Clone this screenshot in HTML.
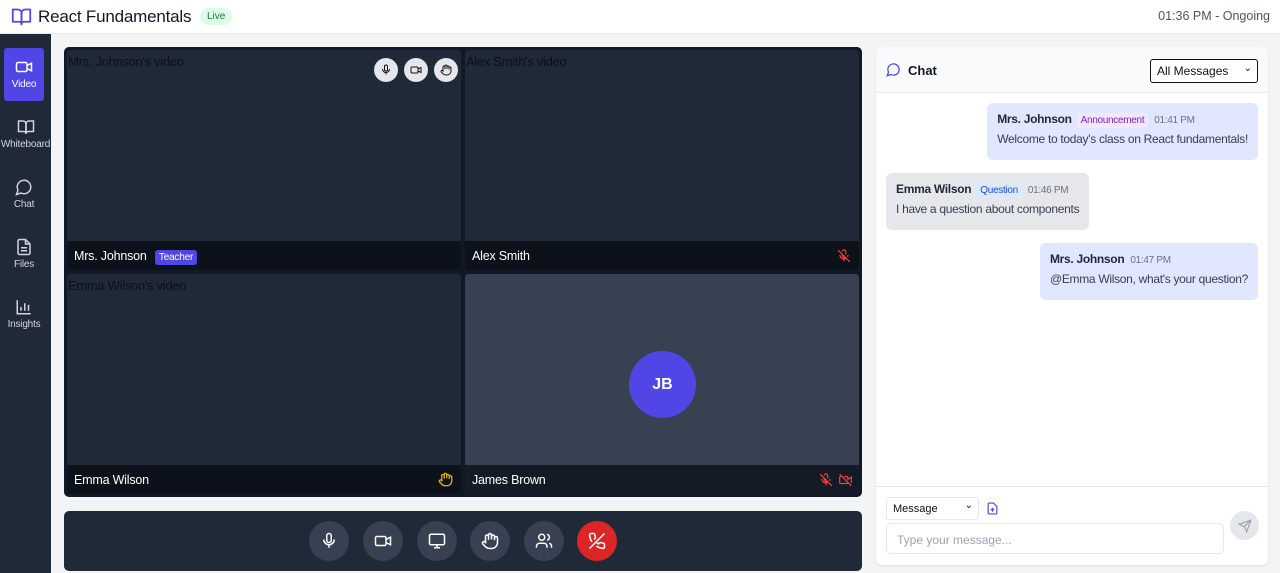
<!DOCTYPE html>
<html><head><meta charset="utf-8"><style>
*{box-sizing:border-box;margin:0;padding:0}
body{width:1280px;height:573px;overflow:hidden;background:#f3f4f6;font-family:"Liberation Sans",sans-serif;position:relative;font-size:12px}
.hdr{position:absolute;left:0;top:0;width:1280px;height:34px;background:#fff;border-bottom:1px solid #e5e7eb}
.side{position:absolute;left:0;top:34px;width:51px;height:539px;background:#1f2937}
.nav{position:absolute;left:4px;width:40px;height:53px;color:#d1d5db;font-size:10px;text-align:center;letter-spacing:-0.2px}
.nav svg{display:block;margin:10px auto 3px}
.grid{position:absolute;left:64px;top:47px;width:798px;height:450px;background:#111827;border-radius:5px}
.tile{position:absolute;width:394px;height:220px;background:#1f2937;border-radius:4px;overflow:hidden;color:#111;font-size:13px}
.tile .alt{position:absolute;left:1px;top:4px;color:#0b0f17;letter-spacing:-0.3px}
.tile .bar{position:absolute;left:0;bottom:0;width:100%;height:29px;background:#0d1119;color:#fff;font-size:12.5px;padding:8px 0 0 7px;letter-spacing:-0.2px}
.badge{background:#4f46e5;color:#fff;font-size:10px;padding:2px 4px;border-radius:3px;margin-left:5px}
.ctl{position:absolute;left:64px;top:511px;width:798px;height:60px;background:#1f2937;border-radius:5px}
.cb{position:absolute;top:10px;width:40px;height:40px;border-radius:50%;background:#374151;display:flex;align-items:center;justify-content:center}
.chat{position:absolute;left:876px;top:47px;width:392px;height:518px;background:#fff;border-radius:6px;box-shadow:0 1px 2px rgba(0,0,0,.1);overflow:hidden}
.ch{height:46px;background:#f9fafb;border-bottom:1px solid #e5e7eb;position:relative}
.msg{position:absolute;border-radius:6px;padding:9px 10px;font-size:12px;color:#374151;white-space:nowrap;letter-spacing:-0.3px;height:57px}
.msg b{color:#1f2937;font-size:12px}
.tm{color:#6b7280;font-size:10px;margin-left:6px}
.tag{font-size:10px;padding:2px 4px;margin-left:5px;border-radius:2px}
.top-ic{position:absolute;top:8px;width:24px;height:24px;border-radius:50%;background:#e5e7eb;display:flex;align-items:center;justify-content:center}
</style></head><body>
<div class="hdr">
 <svg style="position:absolute;left:11px;top:6px" width="21" height="21" viewBox="0 0 24 24" fill="none" stroke="#4f46e5" stroke-width="2" stroke-linecap="round" stroke-linejoin="round"><path d="M2 4h6a4 4 0 0 1 4 4v13a3 3 0 0 0-3-3H2z"/><path d="M22 4h-6a4 4 0 0 0-4 4v13a3 3 0 0 1 3-3h7z"/></svg>
 <div style="position:absolute;left:38px;top:7px;font-size:17px;color:#111827;letter-spacing:-0.2px">React Fundamentals</div>
 <div style="position:absolute;left:200px;top:8px;background:#dcfce7;color:#15803d;font-size:10px;padding:3px 7px;border-radius:9px">Live</div>
 <div style="position:absolute;right:10px;top:9px;font-size:12.5px;color:#4b5563">01:36 PM - Ongoing</div>
</div>
<div class="side">
 <div class="nav" style="top:14px;background:#4f46e5;color:#fff;border-radius:3px"><svg width="18" height="18" viewBox="0 0 24 24" fill="none" stroke="#fff" stroke-width="2"><rect x="2" y="6" width="14" height="12" rx="2"/><path d="M16 10l6-3v10l-6-3"/></svg>Video</div>
 <div class="nav" style="top:74px;left:0;width:51px"><svg width="18" height="18" viewBox="0 0 24 24" fill="none" stroke="#d1d5db" stroke-width="2"><path d="M2 4h6a4 4 0 0 1 4 4v13a3 3 0 0 0-3-3H2z"/><path d="M22 4h-6a4 4 0 0 0-4 4v13a3 3 0 0 1 3-3h7z"/></svg>Whiteboard</div>
 <div class="nav" style="top:134px"><svg width="18" height="18" viewBox="0 0 24 24" fill="none" stroke="#d1d5db" stroke-width="2"><path d="M7.9 20A9 9 0 1 0 4 16.1L2 22z"/></svg>Chat</div>
 <div class="nav" style="top:194px"><svg width="18" height="18" viewBox="0 0 24 24" fill="none" stroke="#d1d5db" stroke-width="2"><path d="M14 2H6a2 2 0 0 0-2 2v16a2 2 0 0 0 2 2h12a2 2 0 0 0 2-2V8z"/><path d="M14 2v6h6M8 13h8M8 17h8"/></svg>Files</div>
 <div class="nav" style="top:254px"><svg width="18" height="18" viewBox="0 0 24 24" fill="none" stroke="#d1d5db" stroke-width="2"><path d="M3 3v18h18M8 17v-5M13 17V7M18 17v-8"/></svg>Insights</div>
</div>
<div class="grid">
 <div class="tile" style="left:3px;top:3px"><span class="alt">Mrs. Johnson's video</span>
  <div class="top-ic" style="left:307px"><svg width="12" height="12" viewBox="0 0 24 24" fill="none" stroke="#111" stroke-width="2"><rect x="9" y="2" width="6" height="12" rx="3"/><path d="M5 10a7 7 0 0 0 14 0M12 17v4"/></svg></div>
  <div class="top-ic" style="left:337px"><svg width="12" height="12" viewBox="0 0 24 24" fill="none" stroke="#111" stroke-width="2"><rect x="2" y="6" width="14" height="12" rx="2"/><path d="M16 10l6-3v10l-6-3"/></svg></div>
  <div class="top-ic" style="left:367px"><svg width="12" height="12" viewBox="0 0 24 24" fill="none" stroke="#111" stroke-width="2"><path d="M18 11V6a2 2 0 0 0-4 0M14 10V4a2 2 0 0 0-4 0v2M10 10.5V6a2 2 0 0 0-4 0v8M18 8a2 2 0 1 1 4 0v6a8 8 0 0 1-8 8h-2c-2.8 0-4.5-.9-6-2.4l-3.6-3.6a2 2 0 0 1 2.8-2.8L7 15"/></svg></div>
  <div class="bar">Mrs. Johnson <span class="badge">Teacher</span></div></div>
 <div class="tile" style="left:401px;top:3px"><span class="alt">Alex Smith's video</span>
  <div class="bar">Alex Smith<svg style="position:absolute;right:8px;top:8px" width="14" height="14" viewBox="0 0 24 24" fill="none" stroke="#ef4444" stroke-width="2"><path d="M2 2l20 20M9 9v3a3 3 0 0 0 5 2M15 9.3V5a3 3 0 0 0-6-1M19 10a7 7 0 0 1-1 3.5M5 10a7 7 0 0 0 11 5.7M12 17v4"/></svg></div></div>
 <div class="tile" style="left:3px;top:227px"><span class="alt">Emma Wilson's video</span>
  <div class="bar">Emma Wilson<svg style="position:absolute;right:8px;top:7px" width="15" height="15" viewBox="0 0 24 24" fill="none" stroke="#eab308" stroke-width="2"><path d="M18 11V6a2 2 0 0 0-4 0M14 10V4a2 2 0 0 0-4 0v2M10 10.5V6a2 2 0 0 0-4 0v8M18 8a2 2 0 1 1 4 0v6a8 8 0 0 1-8 8h-2c-2.8 0-4.5-.9-6-2.4l-3.6-3.6a2 2 0 0 1 2.8-2.8L7 15"/></svg></div></div>
 <div class="tile" style="left:401px;top:227px;background:#374151">
  <div style="position:absolute;left:164px;top:77px;width:67px;height:67px;border-radius:50%;background:#4f46e5;color:#fff;font-size:16px;font-weight:bold;display:flex;align-items:center;justify-content:center">JB</div>
  <div class="bar" style="background:#151b25">James Brown
   <svg style="position:absolute;right:26px;top:8px" width="14" height="14" viewBox="0 0 24 24" fill="none" stroke="#ef4444" stroke-width="2"><path d="M2 2l20 20M9 9v3a3 3 0 0 0 5 2M15 9.3V5a3 3 0 0 0-6-1M19 10a7 7 0 0 1-1 3.5M5 10a7 7 0 0 0 11 5.7M12 17v4"/></svg>
   <svg style="position:absolute;right:6px;top:8px" width="15" height="14" viewBox="0 0 24 24" fill="none" stroke="#ef4444" stroke-width="2"><path d="M2 2l20 20M10 6h4a2 2 0 0 1 2 2v3l6-4v10M16 16a2 2 0 0 1-2 2H4a2 2 0 0 1-2-2V8a2 2 0 0 1 2-2"/></svg></div></div>
</div>
<div class="ctl">
 <div class="cb" style="left:245px"><svg width="18" height="18" viewBox="0 0 24 24" fill="none" stroke="#fff" stroke-width="2"><rect x="9" y="2" width="6" height="12" rx="3"/><path d="M5 10a7 7 0 0 0 14 0M12 17v4"/></svg></div>
 <div class="cb" style="left:299px"><svg width="18" height="18" viewBox="0 0 24 24" fill="none" stroke="#fff" stroke-width="2"><rect x="2" y="6" width="14" height="12" rx="2"/><path d="M16 10l6-3v10l-6-3"/></svg></div>
 <div class="cb" style="left:353px"><svg width="18" height="18" viewBox="0 0 24 24" fill="none" stroke="#fff" stroke-width="2"><rect x="2" y="3" width="20" height="14" rx="2"/><path d="M8 21h8M12 17v4"/></svg></div>
 <div class="cb" style="left:406px"><svg width="18" height="18" viewBox="0 0 24 24" fill="none" stroke="#fff" stroke-width="2"><path d="M18 11V6a2 2 0 0 0-4 0M14 10V4a2 2 0 0 0-4 0v2M10 10.5V6a2 2 0 0 0-4 0v8M18 8a2 2 0 1 1 4 0v6a8 8 0 0 1-8 8h-2c-2.8 0-4.5-.9-6-2.4l-3.6-3.6a2 2 0 0 1 2.8-2.8L7 15"/></svg></div>
 <div class="cb" style="left:460px"><svg width="18" height="18" viewBox="0 0 24 24" fill="none" stroke="#fff" stroke-width="2"><circle cx="9" cy="7" r="4"/><path d="M16 21v-2a4 4 0 0 0-4-4H6a4 4 0 0 0-4 4v2M16 3.1a4 4 0 0 1 0 7.8M22 21v-2a4 4 0 0 0-3-3.9"/></svg></div>
 <div class="cb" style="left:513px;background:#dc2626"><svg width="18" height="18" viewBox="0 0 24 24" fill="none" stroke="#fff" stroke-width="2"><path d="M22 2L2 22M10.7 13.3a16 16 0 0 0 3.4 2.6l1.3-1.3a2 2 0 0 1 2.1-.4c.9.3 1.8.5 2.8.7a2 2 0 0 1 1.7 2v3a2 2 0 0 1-2.2 2 19.8 19.8 0 0 1-8.6-3M5.2 13.2A19.8 19.8 0 0 1 2.1 4.2 2 2 0 0 1 4.1 2h3a2 2 0 0 1 2 1.7c.1 1 .4 1.9.7 2.8a2 2 0 0 1-.4 2.1L8.1 9.9"/></svg></div>
</div>
<div class="chat">
 <div class="ch">
  <svg style="position:absolute;left:10px;top:15px" width="15" height="15" viewBox="0 0 24 24" fill="none" stroke="#4f46e5" stroke-width="2"><path d="M7.9 20A9 9 0 1 0 4 16.1L2 22z"/></svg>
  <div style="position:absolute;left:32px;top:16px;font-size:13px;font-weight:bold;color:#111827">Chat</div>
  <div style="position:absolute;left:274px;top:12px;width:108px;height:24px;border:1.5px solid #111;border-radius:3px;background:#fff;font-size:12px;padding:4px 6px;color:#111">All Messages<span style="position:absolute;right:5px;top:3px;font-size:10px">&#8964;</span></div>
 </div>
 <div class="msg" style="right:10px;top:56px;background:#e0e7ff"><b>Mrs. Johnson</b><span class="tag" style="background:#f3e8ff;color:#7e22ce">Announcement</span><span class="tm">01:41 PM</span><div style="margin-top:6px">Welcome to today's class on React fundamentals!</div></div>
 <div class="msg" style="left:10px;top:126px;background:#e5e7eb"><b>Emma Wilson</b><span class="tag" style="background:#dbeafe;color:#1d4ed8">Question</span><span class="tm">01:46 PM</span><div style="margin-top:6px">I have a question about components</div></div>
 <div class="msg" style="right:10px;top:196px;background:#e0e7ff"><b>Mrs. Johnson</b><span class="tm">01:47 PM</span><div style="margin-top:6px">@Emma Wilson, what's your question?</div></div>
 <div style="position:absolute;left:0;top:439px;width:100%;border-top:1px solid #e5e7eb"></div>
 <div style="position:absolute;left:10px;top:450px;width:93px;height:23px;border:1px solid #e5e7eb;border-radius:3px;font-size:11px;padding:5px 6px;color:#111">Message<span style="position:absolute;right:5px;top:2px;font-size:10px">&#8964;</span></div>
 <svg style="position:absolute;left:110px;top:454px" width="13" height="15" viewBox="0 0 24 24" fill="none" stroke="#4f46e5" stroke-width="2.2"><path d="M14 2H6a2 2 0 0 0-2 2v16a2 2 0 0 0 2 2h12a2 2 0 0 0 2-2V8z"/><path d="M12 18v-6M9 15l3-3 3 3"/></svg>
 <div style="position:absolute;left:10px;top:476px;width:338px;height:31px;border:1px solid #e5e7eb;border-radius:5px;font-size:12px;color:#9ca3af;padding:9px 10px">Type your message...</div>
 <div style="position:absolute;left:354px;top:464px;width:29px;height:29px;border-radius:50%;background:#e5e7eb;display:flex;align-items:center;justify-content:center"><svg width="14" height="14" viewBox="0 0 24 24" fill="none" stroke="#9ca3af" stroke-width="2"><path d="M22 2L11 13M22 2l-7 20-4-9-9-4z"/></svg></div>
</div>
</body></html>
